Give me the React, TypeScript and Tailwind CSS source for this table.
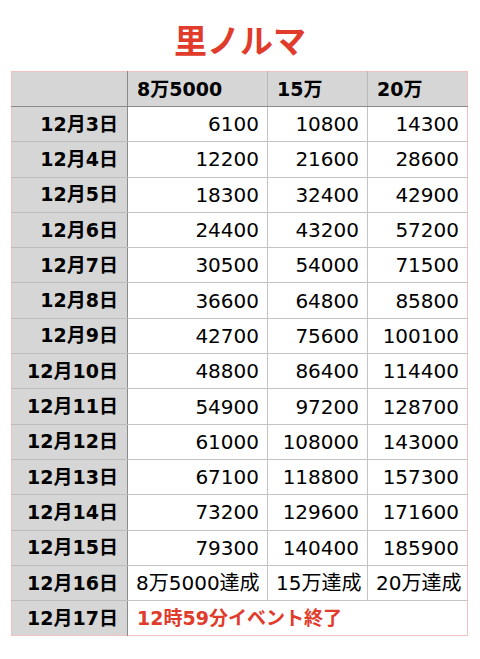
const rows: [string, string, string, string][] = [
  ['12月3日', '6100', '10800', '14300'],
  ['12月4日', '12200', '21600', '28600'],
  ['12月5日', '18300', '32400', '42900'],
  ['12月6日', '24400', '43200', '57200'],
  ['12月7日', '30500', '54000', '71500'],
  ['12月8日', '36600', '64800', '85800'],
  ['12月9日', '42700', '75600', '100100'],
  ['12月10日', '48800', '86400', '114400'],
  ['12月11日', '54900', '97200', '128700'],
  ['12月12日', '61000', '108000', '143000'],
  ['12月13日', '67100', '118800', '157300'],
  ['12月14日', '73200', '129600', '171600'],
  ['12月15日', '79300', '140400', '185900'],
]

// DejaVu gives the wide digits of the original; CJK falls through to Noto
const font = { fontFamily: '"DejaVu Sans", "Noto Sans CJK JP", sans-serif' }

export default function App() {
  return (
    <div className="h-[659px] w-[480px] bg-white text-black" style={font}>
      <h1
        className="h-[71px] pt-[19px] text-center text-[33px] font-bold leading-[40px] text-[#e03b2b]"
        style={{ fontFamily: '"Noto Sans CJK JP", sans-serif' }}
      >
        里ノルマ
      </h1>

      <table className="ml-[11px] w-[456px] table-fixed border-collapse border border-[#f2c2c2] text-[20px] leading-none">
        <colgroup>
          <col className="w-[116px]" />
          <col className="w-[140px]" />
          <col className="w-[100px]" />
          <col className="w-[100px]" />
        </colgroup>
        <thead>
          <tr className="h-[35px] bg-[#d6d6d6]">
            <th className="border-r border-b border-r-[#8a8a8a] border-b-[#8a8a8a]"></th>
            <th className="border-r border-b border-r-[#b8b8b8] border-b-[#8a8a8a] pl-[9px] text-left text-[19px] font-bold">8万5000</th>
            <th className="border-r border-b border-r-[#b8b8b8] border-b-[#8a8a8a] pl-[9px] text-left text-[19px] font-bold">15万</th>
            <th className="border-b border-b-[#8a8a8a] pl-[9px] text-left text-[19px] font-bold">20万</th>
          </tr>
        </thead>
        <tbody>
          {rows.map(([day, a, b, c]) => (
            <tr key={day} className="h-[35.3px]">
              <th className="border-r border-b border-r-[#8a8a8a] border-b-[#bdbdbd] bg-[#d6d6d6] pr-[9px] text-right text-[19px] font-bold">
                {day}
              </th>
              <td className="border-r border-b border-[#c4c4c4] pr-[8px] text-right">{a}</td>
              <td className="border-r border-b border-[#c4c4c4] pr-[8px] text-right">{b}</td>
              <td className="border-b border-[#c4c4c4] pr-[8px] text-right">{c}</td>
            </tr>
          ))}
          <tr className="h-[35.3px]">
            <th className="border-r border-b border-r-[#8a8a8a] border-b-[#bdbdbd] bg-[#d6d6d6] pr-[9px] text-right text-[19px] font-bold">
              12月16日
            </th>
            <td className="border-r border-b border-[#c4c4c4] pl-[8px] text-left">8万5000達成</td>
            <td className="border-r border-b border-[#c4c4c4] pl-[8px] text-left">15万達成</td>
            <td className="border-b border-[#c4c4c4] pl-[8px] text-left">20万達成</td>
          </tr>
          <tr className="h-[35.3px]">
            <th className="border-r border-r-[#8a8a8a] bg-[#d6d6d6] pr-[9px] text-right text-[19px] font-bold">12月17日</th>
            <td colSpan={3} className="pl-[9px] text-left text-[19px] font-bold text-[#e03b2b]">
              12時59分イベント終了
            </td>
          </tr>
        </tbody>
      </table>
    </div>
  )
}
